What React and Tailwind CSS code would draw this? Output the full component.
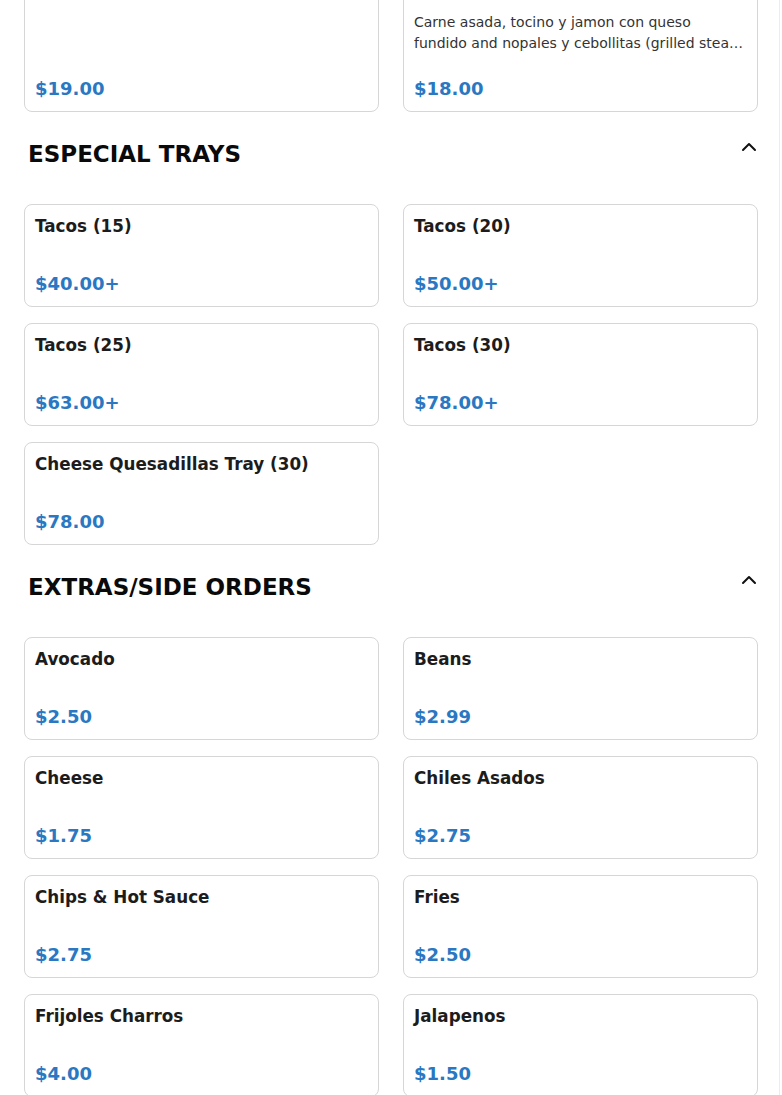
import { ChevronUp } from 'lucide-react';

const trays = [
  { name: 'Tacos (15)', price: '$40.00+' },
  { name: 'Tacos (20)', price: '$50.00+' },
  { name: 'Tacos (25)', price: '$63.00+' },
  { name: 'Tacos (30)', price: '$78.00+' },
  { name: 'Cheese Quesadillas Tray (30)', price: '$78.00' },
];

const extras = [
  { name: 'Avocado', price: '$2.50' },
  { name: 'Beans', price: '$2.99' },
  { name: 'Cheese', price: '$1.75' },
  { name: 'Chiles Asados', price: '$2.75' },
  { name: 'Chips & Hot Sauce', price: '$2.75' },
  { name: 'Fries', price: '$2.50' },
  { name: 'Frijoles Charros', price: '$4.00' },
  { name: 'Jalapenos', price: '$1.50' },
];

function ItemCard({ name, description, price }) {
  return (
    <div className="flex min-h-[103px] flex-col rounded-lg border border-[#d6d6d6] bg-white px-[10px] pt-[10px] pb-[10px]">
      <p className="text-[16.8px] font-bold leading-[22px] text-[#1c1c1c]">{name}</p>
      {description !== undefined && (
        <p className="mt-[8px] h-[42px] overflow-hidden line-clamp-2 text-[14px] leading-[21px] text-[#333]">{description}</p>
      )}
      <p className="mt-auto pt-[23px] text-[18px] font-bold leading-[24px] text-[#2a78c2]">{price}</p>
    </div>
  );
}

function Section({ title, items }) {
  return (
    <section>
      <div className="mt-[26px] flex items-start justify-between pl-1 pr-[1px]">
        <h2 className="text-[23px] font-bold leading-8 text-[#0a0a0a]">{title}</h2>
        <ChevronUp className="-mt-[3px] -mr-[4px] h-6 w-6 text-[#111]" strokeWidth={2} />
      </div>
      <div className="mt-[34px] grid grid-cols-2 gap-x-6 gap-y-4">
        {items.map((item) => (
          <ItemCard key={item.name} {...item} />
        ))}
      </div>
    </section>
  );
}

export default function App() {
  return (
    <div
      className="h-[1095px] w-[780px] overflow-hidden border-r border-[#ececec] bg-white"
      style={{ fontFamily: '"DejaVu Sans", Verdana, sans-serif' }}
    >
      <div className="-mt-[29px] pl-6 pr-[21px]">
        <div className="grid grid-cols-2 gap-x-6 gap-y-4">
          <ItemCard name="Alambre Mixto" description="" price="$19.00" />
          <ItemCard
            name="Alambre"
            description="Carne asada, tocino y jamon con queso fundido and nopales y cebollitas (grilled steak, bacon and ham with melted cheese, cactus and green onions)"
            price="$18.00"
          />
        </div>
        <Section title="ESPECIAL TRAYS" items={trays} />
        <Section title="EXTRAS/SIDE ORDERS" items={extras} />
      </div>
    </div>
  );
}
